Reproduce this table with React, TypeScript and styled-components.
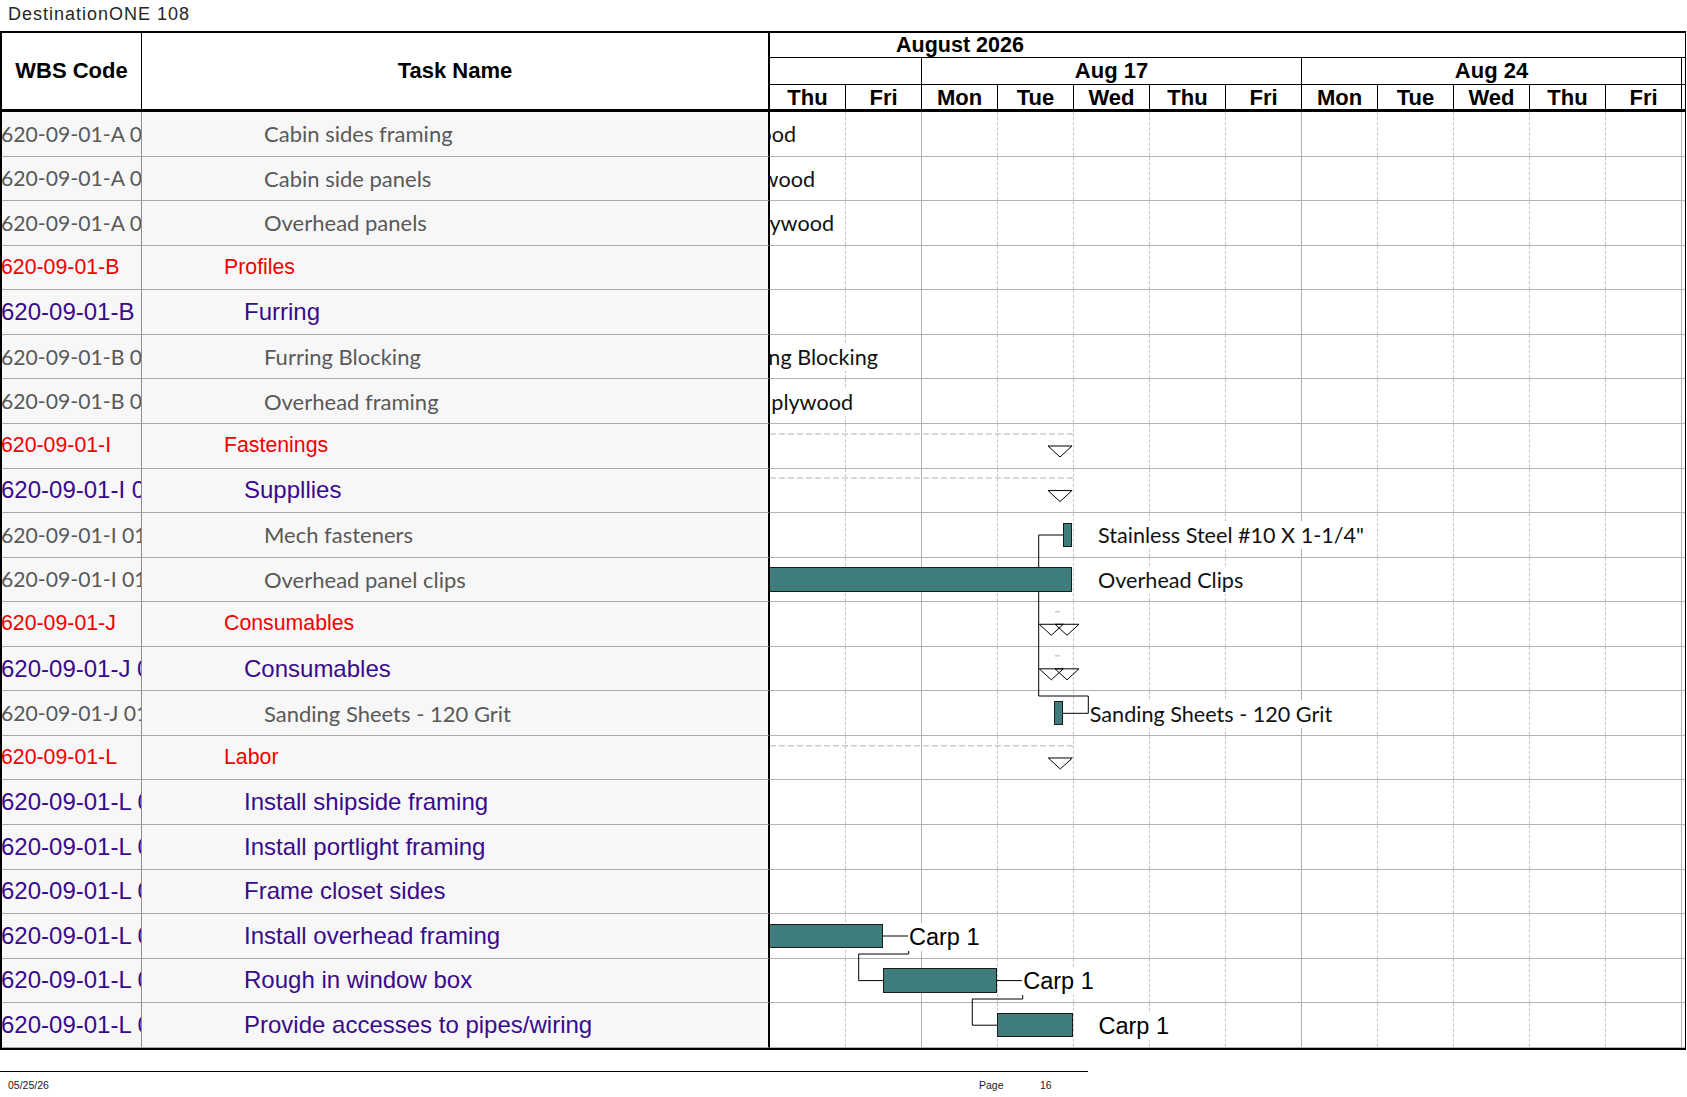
import React from 'react';
import styled, { createGlobalStyle, css } from 'styled-components';

const ROW_H = 44.57;
const DAY_W = 76;
const CHART_W = 915;
const LABEL_H = 28;

type Level = 'summary' | 'group' | 'task';

interface TaskRow {
  wbs: string;
  name: string;
  level: Level;
}

const rows: TaskRow[] = [
  { wbs: '620-09-01-A 01.01', name: 'Cabin sides framing', level: 'task' },
  { wbs: '620-09-01-A 01.02', name: 'Cabin side panels', level: 'task' },
  { wbs: '620-09-01-A 01.03', name: 'Overhead panels', level: 'task' },
  { wbs: '620-09-01-B', name: 'Profiles', level: 'summary' },
  { wbs: '620-09-01-B 01', name: 'Furring', level: 'group' },
  { wbs: '620-09-01-B 01.01', name: 'Furring Blocking', level: 'task' },
  { wbs: '620-09-01-B 01.02', name: 'Overhead framing', level: 'task' },
  { wbs: '620-09-01-I', name: 'Fastenings', level: 'summary' },
  { wbs: '620-09-01-I 01', name: 'Suppllies', level: 'group' },
  { wbs: '620-09-01-I 01.01', name: 'Mech fasteners', level: 'task' },
  { wbs: '620-09-01-I 01.02', name: 'Overhead panel clips', level: 'task' },
  { wbs: '620-09-01-J', name: 'Consumables', level: 'summary' },
  { wbs: '620-09-01-J 01', name: 'Consumables', level: 'group' },
  { wbs: '620-09-01-J 01.01', name: 'Sanding Sheets - 120 Grit', level: 'task' },
  { wbs: '620-09-01-L', name: 'Labor', level: 'summary' },
  { wbs: '620-09-01-L 01', name: 'Install shipside framing', level: 'group' },
  { wbs: '620-09-01-L 02', name: 'Install portlight framing', level: 'group' },
  { wbs: '620-09-01-L 03', name: 'Frame closet sides', level: 'group' },
  { wbs: '620-09-01-L 04', name: 'Install overhead framing', level: 'group' },
  { wbs: '620-09-01-L 05', name: 'Rough in window box', level: 'group' },
  { wbs: '620-09-01-L 06', name: 'Provide accesses to pipes/wiring', level: 'group' },
];

const days = ['Thu', 'Fri', 'Mon', 'Tue', 'Wed', 'Thu', 'Fri', 'Mon', 'Tue', 'Wed', 'Thu', 'Fri'];
const weeks = [
  { label: '', days: 2 },
  { label: 'Aug 17', days: 5 },
  { label: 'Aug 24', days: 5 },
];

const rowTop = (r: number) => r * ROW_H;

const bars = [
  { row: 9, x: 293.3, w: 9 },
  { row: 10, x: -40, w: 342.3 },
  { row: 13, x: 284.3, w: 8.4 },
  { row: 18, x: -40, w: 152.7 },
  { row: 19, x: 113, w: 114 },
  { row: 20, x: 227, w: 76 },
];

type LabelFont = 'calibri' | 'arial';
const labels: { row: number; x: number; text: string; font: LabelFont }[] = [
  { row: 9, x: 327, text: 'Stainless Steel #10 X 1-1/4"', font: 'calibri' },
  { row: 10, x: 327, text: 'Overhead Clips', font: 'calibri' },
  { row: 13, x: 318.8, text: 'Sanding Sheets - 120 Grit', font: 'calibri' },
  { row: 18, x: 138, text: 'Carp 1', font: 'arial' },
  { row: 19, x: 252.2, text: 'Carp 1', font: 'arial' },
  { row: 20, x: 327.5, text: 'Carp 1', font: 'arial' },
];

// labels of bars that end before the visible timescale, cut by the chart edge
const clippedLabels = [
  { row: 0, end: 26, text: '1/2" Plywood' },
  { row: 1, end: 45, text: '1/4" Plywood' },
  { row: 2, end: 64, text: '1/4" Plywood' },
  { row: 5, end: 108, text: 'Furring Blocking' },
  { row: 6, end: 83, text: '3/8" plywood' },
];

const triangles = [
  { row: 7, x: 278 },
  { row: 8, x: 278 },
  { row: 11, x: 269.3 },
  { row: 11, x: 285 },
  { row: 12, x: 269.3 },
  { row: 12, x: 285 },
  { row: 14, x: 278.3 },
];

const summaryLines = [
  { row: 7, y: 10, x1: 0, x2: 303 },
  { row: 8, y: 9.5, x1: 0, x2: 303 },
  { row: 11, y: 9.5, x1: 285, x2: 290 },
  { row: 12, y: 9, x1: 285, x2: 290 },
  { row: 14, y: 9.7, x1: 0, x2: 303 },
];

const links = [
  'M 293.3 423 H 268.7 V 584 H 318.3 V 601.3 H 292.7',
  'M 112.7 824 H 138.7 V 842 H 88.7 V 868.6 H 113',
  'M 227 868.6 H 252.7 V 887 H 202.3 V 913.2 H 227',
];

const GlobalStyle = createGlobalStyle`
  html, body {
    margin: 0;
    padding: 0;
    background: #ffffff;
  }
  body {
    font-family: "Liberation Sans", Arial, sans-serif;
    color: #000;
  }
  * { box-sizing: border-box; }
`;

const Page = styled.div`
  width: 1687px;
  height: 1097px;
  overflow: hidden;
  background: #fff;
`;

const Title = styled.div`
  height: 31px;
  padding-left: 8px;
  font-family: "Liberation Sans", Arial, sans-serif;
  font-size: 18px;
  letter-spacing: 1px;
  line-height: 29px;
  color: #262626;
`;

const Sheet = styled.div`
  width: 1686px;
  border-top: 2px solid #000;
  border-left: 2px solid #000;
  border-right: 1px solid #000;
  border-bottom: 2px solid #000;
`;

const Header = styled.div`
  display: flex;
  height: 79px;
  border-bottom: 3px solid #000;
`;

const HeadTitle = styled.div<{ $w: number; $thick?: boolean }>`
  width: ${(p) => p.$w}px;
  flex-shrink: 0;
  display: flex;
  align-items: center;
  justify-content: center;
  border-right: ${(p) => (p.$thick ? 2 : 1)}px solid #000;
  font-weight: bold;
  font-size: 22px;
  padding-bottom: 1px;
`;

const ChartHead = styled.div`
  width: ${CHART_W}px;
  display: flex;
  flex-direction: column;
`;

const MonthRow = styled.div`
  height: 25px;
  border-bottom: 1px solid #000;
  padding-left: 126px;
  font-weight: bold;
  font-size: 21.5px;
  line-height: 24px;
`;

const WeekRow = styled.div`
  height: 27px;
  display: flex;
  border-bottom: 1px solid #000;
`;

const WeekCell = styled.div<{ $days: number }>`
  width: ${(p) => p.$days * DAY_W}px;
  flex-shrink: 0;
  border-right: 1px solid #000;
  text-align: center;
  font-weight: bold;
  font-size: 22px;
  line-height: 26px;
`;

const DayRow = styled.div`
  height: 24px;
  display: flex;
`;

const DayHead = styled.div`
  width: ${DAY_W}px;
  flex-shrink: 0;
  border-right: 1px solid #000;
  text-align: center;
  font-weight: bold;
  font-size: 22px;
  line-height: 25px;
`;

const Body = styled.div`
  display: flex;
`;

const LeftCols = styled.div`
  width: 768px;
  flex-shrink: 0;
  display: flex;
  flex-direction: column;
`;

const LeftRow = styled.div`
  display: grid;
  grid-template-columns: 140px 628px;
  height: ${ROW_H}px;
`;

const levelText = {
  summary: css`
    font-family: "Liberation Sans", Arial, sans-serif;
    font-size: 21.3px;
    color: #f20000;
  `,
  group: css`
    font-family: "Liberation Sans", Arial, sans-serif;
    font-size: 24px;
    color: #3a0a8c;
  `,
  task: css`
    font-family: Lato, "Open Sans", sans-serif;
    font-size: 22px;
    color: #595959;
  `,
};

const indent: Record<Level, number> = { summary: 82, group: 102, task: 122 };

const WbsCell = styled.div<{ $level: Level }>`
  display: flex;
  align-items: center;
  overflow: hidden;
  white-space: nowrap;
  padding-left: 0;
  background: #f7f7f7;
  border-right: 1px solid #8f8f8f;
  border-bottom: 1px solid #a8a8a8;
  ${(p) => levelText[p.$level]}
  ${(p) =>
    p.$level === 'task' &&
    css`
      font-size: 21.2px;
    `}
`;

const WbsText = styled.span`
  margin-left: -1px;
`;

const TaskCell = styled.div<{ $level: Level }>`
  display: flex;
  align-items: center;
  overflow: hidden;
  white-space: nowrap;
  padding-left: ${(p) => indent[p.$level]}px;
  background: #f7f7f7;
  border-right: 2px solid #000;
  border-bottom: 1px solid #a8a8a8;
  ${(p) => levelText[p.$level]}
`;

const Chart = styled.div`
  position: relative;
  width: ${CHART_W}px;
  flex-shrink: 0;
  overflow: hidden;
`;

const ChartRow = styled.div`
  display: flex;
  height: ${ROW_H}px;
  border-bottom: 1px solid #b2b2b2;
`;

const DayCell = styled.div<{ $weekEnd: boolean }>`
  width: ${DAY_W}px;
  flex-shrink: 0;
  border-right: 1px ${(p) => (p.$weekEnd ? 'solid #b2b2b2' : 'dashed #c6c6c6')};
`;

const Overlay = styled.div`
  position: absolute;
  inset: 0;
  pointer-events: none;
`;

const LinkLayer = styled.svg`
  position: absolute;
  left: 0;
  top: 0;
  overflow: visible;
`;

const Bar = styled.div.attrs<{ $x: number; $y: number; $w: number }>((p) => ({
  style: { left: p.$x, top: p.$y, width: p.$w },
}))<{ $x: number; $y: number; $w: number }>`
  position: absolute;
  height: 24.5px;
  background: #3f7d7d;
  border: 1px solid #1b1b1b;
`;

const labelFonts = {
  calibri: css`
    font-family: Lato, "Open Sans", sans-serif;
    font-size: 21.6px;
    color: #111;
  `,
  arial: css`
    font-family: "Liberation Sans", Arial, sans-serif;
    font-size: 23.5px;
    color: #000;
  `,
};

const BarLabel = styled.div.attrs<{ $x: number; $y: number }>((p) => ({
  style: { left: p.$x, top: p.$y },
}))<{ $x: number; $y: number; $font: LabelFont }>`
  position: absolute;
  height: ${LABEL_H}px;
  line-height: ${LABEL_H}px;
  padding-left: 1px;
  white-space: nowrap;
  background: #fff;
  ${(p) => labelFonts[p.$font]}
`;

const CutLabel = styled.div.attrs<{ $right: number; $y: number }>((p) => ({
  style: { right: p.$right, top: p.$y },
}))<{ $right: number; $y: number }>`
  position: absolute;
  height: ${LABEL_H}px;
  line-height: ${LABEL_H}px;
  white-space: nowrap;
  background: #fff;
  ${labelFonts.calibri}
`;

const Footer = styled.div`
  width: 1088px;
  margin-top: 21px;
  border-top: 1px solid #000;
  display: grid;
  grid-template-columns: 979px 61px 1fr;
  padding-top: 6px;
  font-family: "Liberation Sans", Arial, sans-serif;
  font-size: 10.5px;
  line-height: 14px;
  color: #1a1a1a;
`;

const FooterDate = styled.span`
  padding-left: 8px;
`;

const labelTop = (r: number) => rowTop(r) + (ROW_H - LABEL_H) / 2;

export default function App() {
  const bodyH = rows.length * ROW_H;
  return (
    <Page>
      <GlobalStyle />
      <Title>DestinationONE 108</Title>
      <Sheet>
        <Header>
          <HeadTitle $w={140}>WBS Code</HeadTitle>
          <HeadTitle $w={628} $thick>
            Task Name
          </HeadTitle>
          <ChartHead>
            <MonthRow>August 2026</MonthRow>
            <WeekRow>
              {weeks.map((w, i) => (
                <WeekCell key={i} $days={w.days}>
                  {w.label}
                </WeekCell>
              ))}
            </WeekRow>
            <DayRow>
              {days.map((d, i) => (
                <DayHead key={i}>{d}</DayHead>
              ))}
            </DayRow>
          </ChartHead>
        </Header>
        <Body>
          <LeftCols>
            {rows.map((r, i) => (
              <LeftRow key={i}>
                <WbsCell $level={r.level}>
                  <WbsText>{r.wbs}</WbsText>
                </WbsCell>
                <TaskCell $level={r.level}>{r.name}</TaskCell>
              </LeftRow>
            ))}
          </LeftCols>
          <Chart>
            {rows.map((_, i) => (
              <ChartRow key={i}>
                {days.map((d, j) => (
                  <DayCell key={j} $weekEnd={d === 'Fri'} />
                ))}
              </ChartRow>
            ))}
            <Overlay>
              <LinkLayer width={CHART_W} height={bodyH}>
                {summaryLines.map((s, i) => (
                  <line
                    key={i}
                    x1={s.x1}
                    x2={s.x2}
                    y1={rowTop(s.row) + s.y}
                    y2={rowTop(s.row) + s.y}
                    stroke="#cbcbcb"
                    strokeWidth={1.5}
                    strokeDasharray="6 3"
                  />
                ))}
                {links.map((d, i) => (
                  <path key={i} d={d} fill="none" stroke="#000" strokeWidth={1} />
                ))}
                {triangles.map((t, i) => {
                  const y = rowTop(t.row);
                  return (
                    <polygon
                      key={i}
                      points={`${t.x},${y + 22} ${t.x + 24},${y + 22} ${t.x + 12},${y + 33}`}
                      fill="none"
                      stroke="#000"
                      strokeWidth={1}
                    />
                  );
                })}
              </LinkLayer>
              {bars.map((b, i) => (
                <Bar key={i} $x={b.x} $y={rowTop(b.row) + 9.5} $w={b.w} />
              ))}
              {clippedLabels.map((l, i) => (
                <CutLabel key={i} $right={CHART_W - l.end} $y={labelTop(l.row)}>
                  {l.text}
                </CutLabel>
              ))}
              {labels.map((l, i) => (
                <BarLabel key={i} $x={l.x} $y={labelTop(l.row)} $font={l.font}>
                  {l.text}
                </BarLabel>
              ))}
            </Overlay>
          </Chart>
        </Body>
      </Sheet>
      <Footer>
        <FooterDate>05/25/26</FooterDate>
        <span>Page</span>
        <span>16</span>
      </Footer>
    </Page>
  );
}
